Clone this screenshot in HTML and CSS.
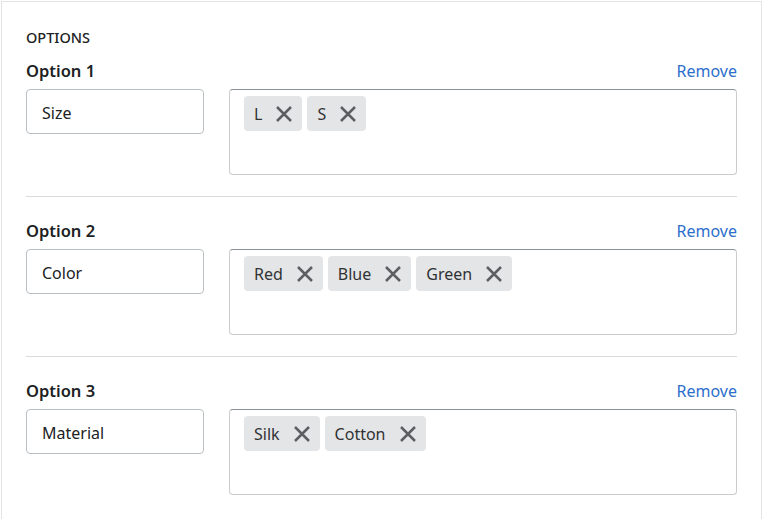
FILE: index.html
```html
<html>
  <head>
    <title>Options</title>
    <meta charset="utf-8" />
    <meta name="viewport" content="width=device-width" />
    <link rel="stylesheet" href="styles.css">
  </head>
  <body>
    <div class="card">
      <h2 class="card-title">OPTIONS</h2>

      <section class="option">
        <div class="option-head">
          <span class="option-name">Option 1</span>
          <a class="remove" href="#">Remove</a>
        </div>
        <div class="option-row">
          <input class="name-input" type="text" value="Size" />
          <div class="tag-box">
            <span class="tag">L<button class="tag-x"><svg viewBox="0 0 20 20"><path d="M3 3L17 17M17 3L3 17" /></svg></button></span>
            <span class="tag">S<button class="tag-x"><svg viewBox="0 0 20 20"><path d="M3 3L17 17M17 3L3 17" /></svg></button></span>
          </div>
        </div>
      </section>

      <section class="option">
        <div class="option-head">
          <span class="option-name">Option 2</span>
          <a class="remove" href="#">Remove</a>
        </div>
        <div class="option-row">
          <input class="name-input" type="text" value="Color" />
          <div class="tag-box">
            <span class="tag">Red<button class="tag-x"><svg viewBox="0 0 20 20"><path d="M3 3L17 17M17 3L3 17" /></svg></button></span>
            <span class="tag">Blue<button class="tag-x"><svg viewBox="0 0 20 20"><path d="M3 3L17 17M17 3L3 17" /></svg></button></span>
            <span class="tag">Green<button class="tag-x"><svg viewBox="0 0 20 20"><path d="M3 3L17 17M17 3L3 17" /></svg></button></span>
          </div>
        </div>
      </section>

      <section class="option">
        <div class="option-head">
          <span class="option-name">Option 3</span>
          <a class="remove" href="#">Remove</a>
        </div>
        <div class="option-row">
          <input class="name-input" type="text" value="Material" />
          <div class="tag-box">
            <span class="tag">Silk<button class="tag-x"><svg viewBox="0 0 20 20"><path d="M3 3L17 17M17 3L3 17" /></svg></button></span>
            <span class="tag">Cotton<button class="tag-x"><svg viewBox="0 0 20 20"><path d="M3 3L17 17M17 3L3 17" /></svg></button></span>
          </div>
        </div>
      </section>
    </div>
  </body>
</html>
```

FILE: styles.css
```css
body {
  margin: 0;
  background: #fff;
}

body,
* {
  font-family: "Noto Sans", "Open Sans", sans-serif;
  color: #202223;
  box-sizing: border-box;
}

.card {
  margin: 1px 1px 0;
  padding: 27px 24px 0;
  border: 1px solid #e3e4e6;
  border-bottom: none;
  min-height: 518px;
}

.card-title {
  margin: 0 0 15px;
  font-size: 14.5px;
  line-height: 16px;
  font-weight: 500;
}

.option {
  padding: 23px 0 21px;
  border-bottom: 1px solid #d9dbdd;
}

.option:first-of-type {
  padding-top: 0;
}

.option:last-of-type {
  border-bottom: none;
}

.option-head {
  display: flex;
  justify-content: space-between;
  align-items: baseline;
  height: 21px;
  padding-top: 1px;
  margin-bottom: 8px;
}

.option-name {
  font-size: 16.5px;
  line-height: 20px;
  font-weight: 600;
}

.remove {
  font-size: 16px;
  line-height: 20px;
  color: #2c6ecb;
  text-decoration: none;
}

.option-row {
  display: flex;
  align-items: flex-start;
  gap: 25px;
}

.name-input {
  width: 178px;
  height: 45px;
  padding: 3px 15px 0;
  font-size: 16px;
  border: 1px solid #babfc3;
  border-radius: 4px;
  outline: none;
}

.tag-box {
  flex: 1;
  height: 86px;
  padding: 6px 14px;
  display: flex;
  align-items: flex-start;
  gap: 5px;
  border: 1px solid #c9cccf;
  border-top-color: #8c9196;
  border-radius: 4px;
}

.tag {
  display: inline-flex;
  align-items: center;
  height: 35px;
  padding: 0 8px 0 10px;
  font-size: 16px;
  color: #303234;
  background: #e4e5e7;
  border-radius: 4px;
}

.tag-x {
  margin-left: 12px;
  padding: 0;
  width: 20px;
  height: 20px;
  border: none;
  background: none;
}

.tag-x svg {
  display: block;
  width: 20px;
  height: 20px;
}

.tag-x path {
  stroke: #5c5f62;
  stroke-width: 2.5;
  fill: none;
}
```
